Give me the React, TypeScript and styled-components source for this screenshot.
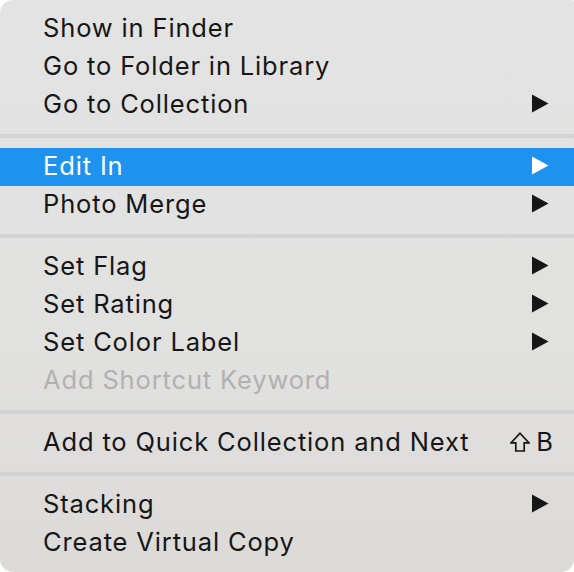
import { FC } from 'react'
import styled, { createGlobalStyle, css } from 'styled-components'

const GlobalStyle = createGlobalStyle`
  html, body {
    margin: 0;
    padding: 0;
    background: #ffffff;
  }
  body {
    font-family: Inter, "Noto Sans", "Liberation Sans", sans-serif;
    -webkit-font-smoothing: antialiased;
  }
`

type Item =
  | { kind: 'item'; label: string; submenu?: boolean; disabled?: boolean; active?: boolean; shortcut?: string }
  | { kind: 'sep' }

const items: Item[] = [
  { kind: 'item', label: 'Show in Finder' },
  { kind: 'item', label: 'Go to Folder in Library' },
  { kind: 'item', label: 'Go to Collection', submenu: true },
  { kind: 'sep' },
  { kind: 'item', label: 'Edit In', submenu: true, active: true },
  { kind: 'item', label: 'Photo Merge', submenu: true },
  { kind: 'sep' },
  { kind: 'item', label: 'Set Flag', submenu: true },
  { kind: 'item', label: 'Set Rating', submenu: true },
  { kind: 'item', label: 'Set Color Label', submenu: true },
  { kind: 'item', label: 'Add Shortcut Keyword', disabled: true },
  { kind: 'sep' },
  { kind: 'item', label: 'Add to Quick Collection and Next', shortcut: 'B' },
  { kind: 'sep' },
  { kind: 'item', label: 'Stacking', submenu: true },
  { kind: 'item', label: 'Create Virtual Copy' },
]

const Menu = styled.div`
  box-sizing: border-box;
  width: 574px;
  height: 572px;
  padding: 10px 0;
  border-radius: 13px 2px 13px 13px;
  background: linear-gradient(180deg, #e3e3e3 0%, #e1e1e0 60%, #dcdad7 100%);
  overflow: hidden;
`

const Row = styled.div<{ $active?: boolean; $disabled?: boolean }>`
  box-sizing: border-box;
  display: flex;
  align-items: center;
  height: 38px;
  padding: 0 25px 3px 43px;
  font-size: 25.5px;
  letter-spacing: 0.85px;
  color: #161616;

  ${({ $active }) =>
    $active &&
    css`
      background: #1d93ef;
      color: #ffffff;
    `}

  ${({ $disabled }) =>
    $disabled &&
    css`
      color: #b1b1b1;
    `}
`

const Label = styled.span`
  flex: 1;
  white-space: nowrap;
`

const Separator = styled.div`
  height: 24px;
  display: flex;
  align-items: center;

  &::after {
    content: '';
    display: block;
    width: 100%;
    height: 4px;
    background: #d3d3d3;
  }
`

const Shortcut = styled.span`
  display: flex;
  align-items: center;
  gap: 6px;
  margin-right: -4px;
  letter-spacing: 0;
`

const Arrow: FC = () => (
  <svg width="18" height="19" viewBox="0 0 18 19">
    <path d="M1 0.5 L17.5 9.5 L1 18.5 Z" fill="currentColor" />
  </svg>
)

const ShiftIcon: FC = () => (
  <svg width="20" height="20" viewBox="0 0 20 20">
    <path
      d="M10 1.2 L18.8 10.8 L14.2 10.8 L14.2 19 L5.8 19 L5.8 10.8 L1.2 10.8 Z"
      fill="none"
      stroke="currentColor"
      strokeWidth="1.7"
      strokeLinejoin="miter"
    />
  </svg>
)

const App: FC = () => (
  <>
    <GlobalStyle />
    <Menu>
      {items.map((item, i) =>
        item.kind === 'sep' ? (
          <Separator key={i} />
        ) : (
          <Row key={i} $active={item.active} $disabled={item.disabled}>
            <Label>{item.label}</Label>
            {item.submenu && <Arrow />}
            {item.shortcut && (
              <Shortcut>
                <ShiftIcon />
                {item.shortcut}
              </Shortcut>
            )}
          </Row>
        ),
      )}
    </Menu>
  </>
)

export default App
